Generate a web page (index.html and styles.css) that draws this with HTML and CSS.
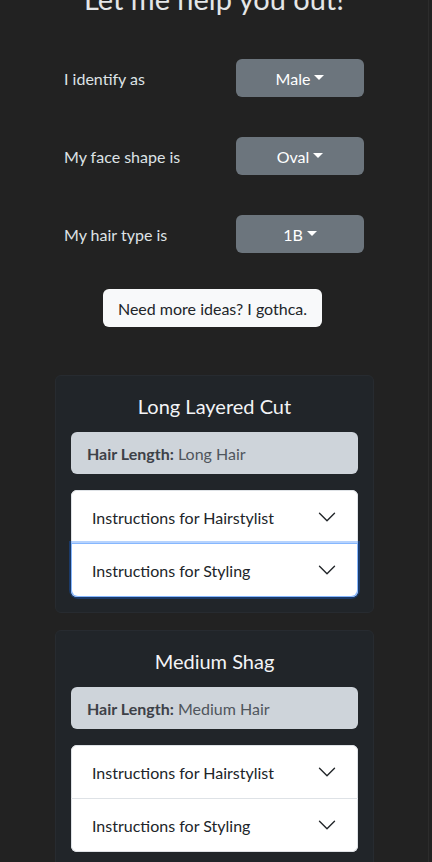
FILE: index.html
```html
<!DOCTYPE html>
<html lang="en">
<head>
<meta charset="utf-8">
<title>Hair helper</title>
<link rel="stylesheet" href="styles.css">
</head>
<body>
<div class="page">
  <h1 class="title">Let me help you out!</h1>
  <div class="form">
    <div class="row">
      <span class="label">I identify as</span>
      <button class="dd">Male<span class="caret"></span></button>
    </div>
    <div class="row">
      <span class="label">My face shape is</span>
      <button class="dd">Oval<span class="caret"></span></button>
    </div>
    <div class="row">
      <span class="label">My hair type is</span>
      <button class="dd">1B<span class="caret"></span></button>
    </div>
  </div>
  <div class="more-wrap"><button class="more">Need more ideas? I gothca.</button></div>

  <div class="card">
    <h2 class="card-title">Long Layered Cut</h2>
    <div class="alert"><b>Hair Length:</b> Long Hair</div>
    <div class="accordion">
      <div class="acc-item">
        <button class="acc-btn">Instructions for Hairstylist<svg class="chev" viewBox="0 0 16 16"><path d="M2 5L8 11L14 5"/></svg></button>
      </div>
      <div class="acc-item">
        <button class="acc-btn focused">Instructions for Styling<svg class="chev" viewBox="0 0 16 16"><path d="M2 5L8 11L14 5"/></svg></button>
      </div>
    </div>
  </div>

  <div class="card">
    <h2 class="card-title">Medium Shag</h2>
    <div class="alert"><b>Hair Length:</b> Medium Hair</div>
    <div class="accordion">
      <div class="acc-item">
        <button class="acc-btn">Instructions for Hairstylist<svg class="chev" viewBox="0 0 16 16"><path d="M2 5L8 11L14 5"/></svg></button>
      </div>
      <div class="acc-item">
        <button class="acc-btn">Instructions for Styling<svg class="chev" viewBox="0 0 16 16"><path d="M2 5L8 11L14 5"/></svg></button>
      </div>
    </div>
  </div>
</div>
</body>
</html>
```
FILE: styles.css
```css
* { box-sizing: border-box; }
html, body { margin: 0; padding: 0; }
body {
  background: #222222;
  color: #dee2e6;
  font-family: Lato, "Noto Sans", sans-serif;
  font-size: 16px;
  line-height: 24px;
  overflow: hidden;
}
.page {
  width: 429px;
  min-height: 862px;
  border-right: 1px solid #2c2c2c;
  padding-bottom: 40px;
}
.title {
  margin: -19px 0 0;
  font-size: 29px;
  line-height: 36px;
  font-weight: 400;
  text-align: center;
  color: #e4e6e8;
}
.form {
  margin-top: 42px;
  display: flex;
  flex-direction: column;
  gap: 40px;
}
.row {
  display: grid;
  grid-template-columns: 172px 128px;
  padding-left: 64px;
  align-items: center;
}
.label { color: #dee2e6; padding-top: 2px; }
.dd {
  height: 38px;
  border: 0;
  border-radius: 6px;
  background: #6c757d;
  color: #fff;
  font: inherit;
  display: flex;
  align-items: center;
  justify-content: center;
  padding: 1px 12px 0;
}
.caret {
  display: inline-block;
  margin-left: 4px;
  width: 0;
  height: 0;
  border-top: 5px solid #fff;
  border-left: 5px solid transparent;
  border-right: 5px solid transparent;
  margin-top: -2px;
}
.more-wrap {
  display: flex;
  justify-content: center;
  margin-top: 36px;
  padding-right: 3px;
}
.more {
  height: 38px;
  padding: 1px 15px 0;
  border: 0;
  border-radius: 6px;
  background: #f8f9fa;
  color: #212529;
  font: inherit;
}
.card {
  margin: 48px 0 0 55px;
  width: 319px;
  background: #212529;
  border: 1px solid #272b30;
  border-radius: 6px;
  padding: 15px 15px 15px;
}
.card + .card { margin-top: 17px; }
.card-title {
  margin: 0 0 11px;
  font-size: 20px;
  line-height: 30px;
  font-weight: 400;
  text-align: center;
  color: #f3f4f6;
}
.alert {
  height: 42px;
  background: #ced4da;
  color: #50565d;
  border-radius: 6px;
  padding: 10px 16px 8px;
  margin-bottom: 16px;
}
.alert b { color: #3d4148; font-weight: 700; }
.accordion {
  background: #fff;
  border-radius: 6px;
}
.acc-item {
  border: 1px solid #dee2e6;
  border-top: 0;
}
.acc-item:first-child {
  border-top: 1px solid #dee2e6;
  border-radius: 6px 6px 0 0;
}
.acc-item:last-child { border-radius: 0 0 6px 6px; }
.acc-btn {
  width: 100%;
  display: flex;
  align-items: center;
  justify-content: space-between;
  padding: 15px 20px 13px 20px;
  border: 0;
  background: #fff;
  color: #212529;
  font: inherit;
  text-align: left;
  border-radius: inherit;
}
.acc-btn.focused {
  position: relative;
  z-index: 3;
  box-shadow: 0 0 0 1px #86b7fe, 0 0 0 3px rgba(13, 110, 253, 0.3);
}
.chev {
  width: 20px;
  height: 20px;
  fill: none;
  stroke: #212529;
  stroke-width: 1.1;
  stroke-linecap: round;
  stroke-linejoin: round;
  margin-top: -2px;
}
```
